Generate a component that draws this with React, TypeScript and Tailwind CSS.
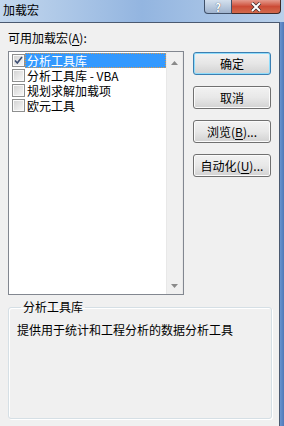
import React from "react";

const font = { fontFamily: '"Noto Sans CJK SC", "Noto Sans", sans-serif' };

function Check({ checked }: { checked?: boolean }) {
  return (
    <div className="w-[13px] h-[13px] shrink-0 border border-[#8e8f8f] bg-[#f4f4f4] flex items-center justify-center">
      <div className="w-[11px] h-[11px] border border-[#fafafa] bg-gradient-to-br from-[#d4d4d4] to-[#f6f6f6] flex items-center justify-center">
        {checked && (
          <svg width="9" height="9" viewBox="0 0 9 9">
            <path d="M1 4.5 L3.3 7 L8 1" fill="none" stroke="#3d4e72" strokeWidth="1.6" />
          </svg>
        )}
      </div>
    </div>
  );
}

function Row({ label, checked, selected }: { label: string; checked?: boolean; selected?: boolean }) {
  return (
    <div className="h-[15px] flex items-center pl-[3px]">
      <Check checked={checked} />
      {selected ? (
        <div className="flex-1 h-[15px] flex items-center bg-[#3399ff] border border-dotted border-[#d89a50] text-white pl-[1px]">
          <span className="leading-[12px]">{label}</span>
        </div>
      ) : (
        <div className="flex-1 h-[15px] flex items-center pl-[2px] text-black">
          <span className="leading-[13px]">{label}</span>
        </div>
      )}
    </div>
  );
}

function Btn({ children, def }: { children: React.ReactNode; def?: boolean }) {
  return (
    <div
      className={
        "w-[78px] h-[23px] rounded-[3px] border flex items-center justify-center text-[12px] text-black " +
        (def
          ? "border-[#3c7fb1] shadow-[inset_0_0_0_1px_#8fdcfb] bg-gradient-to-b from-[#f2f2f2] via-[#e6e6e6] to-[#d2d2d2]"
          : "border-[#707070] shadow-[inset_0_0_0_1px_#fbfbfb] bg-gradient-to-b from-[#f2f2f2] via-[#e8e8e8] to-[#d2d2d2]")
      }
    >
      <span className="leading-[16px]">{children}</span>
    </div>
  );
}

export default function App() {
  return (
    <div className="w-[284px] h-[426px] overflow-hidden flex flex-col bg-[#5d87c6] text-[12px]" style={font}>
      {/* title bar */}
      <div className="h-[22px] flex items-start bg-gradient-to-r from-[#c3d7ed] via-[#93b5e0] to-[#b9d0ea]">
        <div className="pl-[3px] pt-[2px] leading-[16px] text-[12px] text-black flex-1">加载宏</div>
        <div className="w-[28px] h-[14px] border border-t-0 border-[#3f5068] rounded-bl-[4px] bg-gradient-to-b from-[#d4e0ee] to-[#9fb3cd] flex items-center justify-center text-white font-bold text-[11px] leading-[12px] [text-shadow:0_0_1px_#303a48]">
          ?
        </div>
        <div className="w-[49px] h-[14px] border border-t-0 border-l-0 border-[#3f2a28] rounded-br-[4px] bg-gradient-to-b from-[#e49a8e] via-[#cc4b36] to-[#d26a4c] flex items-center justify-center mr-[3px]">
          <svg width="12" height="10" viewBox="0 0 12 10">
            <path d="M2 1 L10 9 M10 1 L2 9" stroke="#3a2a2a" strokeWidth="3.4" />
            <path d="M2 1 L10 9 M10 1 L2 9" stroke="#ffffff" strokeWidth="2" />
          </svg>
        </div>
      </div>
      {/* body + right frame */}
      <div className="flex-1 flex">
        <div className="w-[280px] bg-[#f0f0f0] border-t border-r border-[#4a5970] flex flex-col pl-[8px] pt-[7px]">
          <div className="leading-[16px] text-black">
            可用加载宏(<span className="underline underline-offset-2">A</span>):
          </div>
          <div className="flex mt-[5px]">
            <div className="w-[176px] h-[244px] border border-[#828790] bg-white flex">
              <div className="flex-1 pt-[1px] flex flex-col">
                <Row label="分析工具库" checked selected />
                <Row label="分析工具库 - VBA" />
                <Row label="规划求解加载项" />
                <Row label="欧元工具" />
              </div>
              <div className="w-[17px] bg-[#f0f0f0] border-x border-[#e8e8e8] flex flex-col items-center justify-between pt-[9px] pb-[6px]">
                <svg width="7" height="4" viewBox="0 0 7 4">
                  <path d="M0 4 L3.5 0 L7 4 Z" fill="#8a8a8a" />
                </svg>
                <svg width="7" height="4" viewBox="0 0 7 4">
                  <path d="M0 0 L3.5 4 L7 0 Z" fill="#8a8a8a" />
                </svg>
              </div>
            </div>
            <div className="ml-[9px] mt-[1px] flex flex-col gap-[11px]">
              <Btn def>确定</Btn>
              <Btn>取消</Btn>
              <Btn>
                浏览(<span className="underline underline-offset-2">B</span>)...
              </Btn>
              <Btn>
                自动化(<span className="underline underline-offset-2">U</span>)...
              </Btn>
            </div>
          </div>
          <fieldset className="mt-[4px] w-[264px] h-[120px] border border-[#d5dfe5] rounded-[3px] shadow-[inset_1px_1px_0_#ffffff,1px_1px_0_#ffffff] pl-[8px]">
            <legend className="ml-[4px] px-[2px] leading-[16px] text-black">分析工具库</legend>
            <div className="pt-[7px] leading-[16px] text-black">提供用于统计和工程分析的数据分析工具</div>
          </fieldset>
        </div>
        <div className="flex-1 bg-gradient-to-r from-[#6a93cf] to-[#4f78b8]" />
      </div>
    </div>
  );
}
